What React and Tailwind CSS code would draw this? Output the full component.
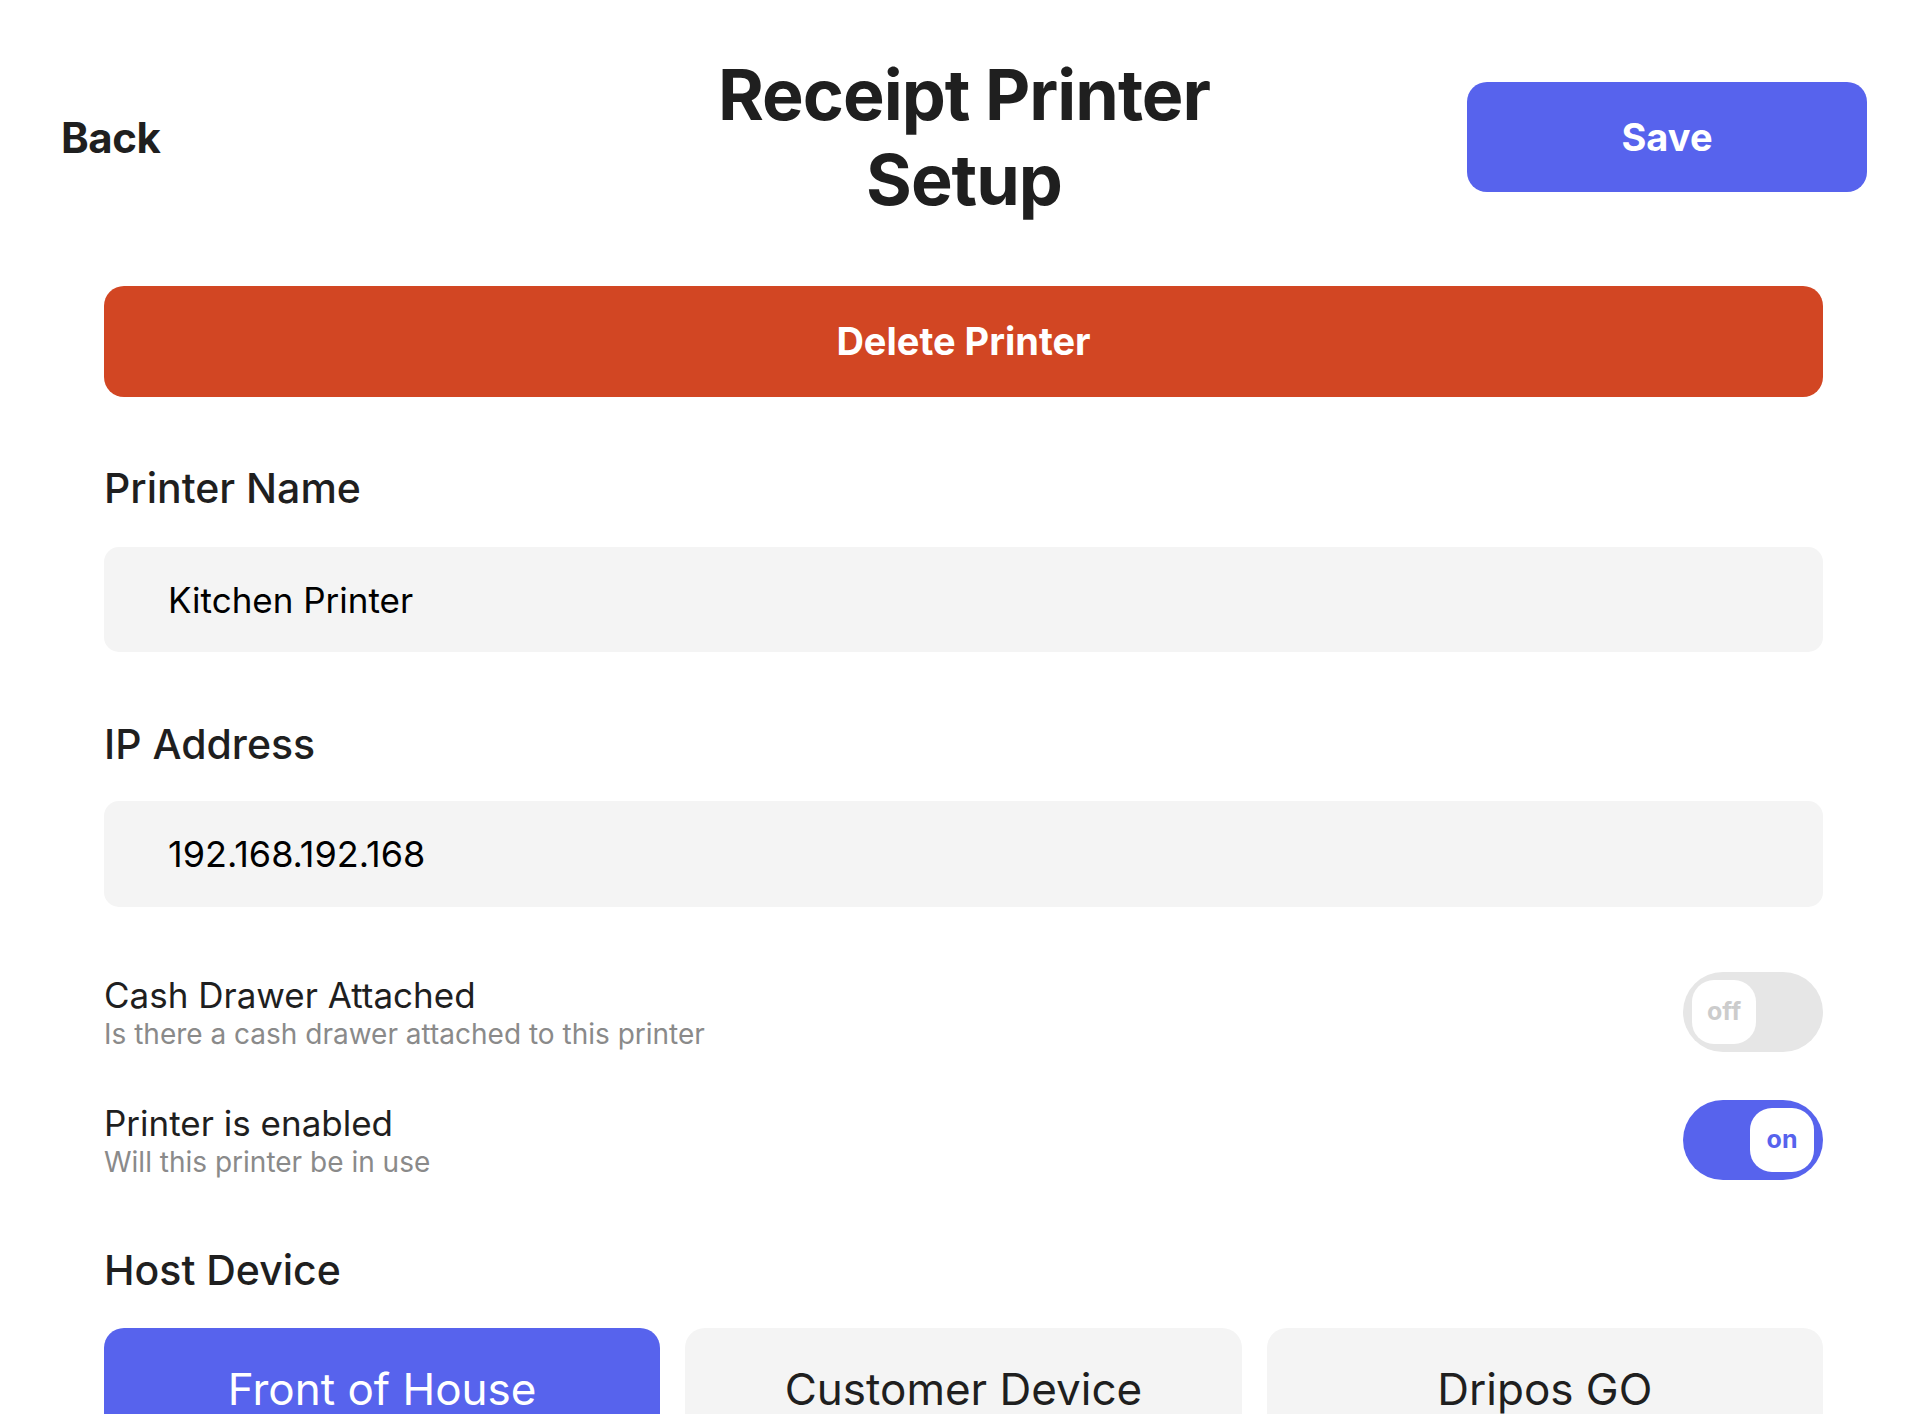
import React, { useState } from 'react';

const Toggle = ({ on, onChange }) => (
  <button
    onClick={() => onChange(!on)}
    className={`flex h-[80px] w-[140px] shrink-0 items-center rounded-[40px] px-[9px] ${
      on ? 'justify-end bg-[#5763ED]' : 'justify-start bg-[#E6E6E6]'
    }`}
  >
    <span
      className={`flex h-[64px] w-[64px] items-center justify-center rounded-[22px] bg-white text-[25px] font-bold ${
        on ? 'text-[#5763ED]' : 'text-[#CCCCCC]'
      }`}
    >
      {on ? 'on' : 'off'}
    </span>
  </button>
);

const ToggleRow = ({ title, subtitle, on, onChange }) => (
  <div className="flex items-center justify-between">
    <div className="flex flex-col">
      <span className="text-[35px] leading-[40px] text-[#1F1F1F]">{title}</span>
      <span className="mt-[3px] text-[28px] leading-[32px] text-[#8A8A8A]">{subtitle}</span>
    </div>
    <Toggle on={on} onChange={onChange} />
  </div>
);

const App = () => {
  const [name, setName] = useState('Kitchen Printer');
  const [ip, setIp] = useState('192.168.192.168');
  const [cashDrawer, setCashDrawer] = useState(false);
  const [enabled, setEnabled] = useState(true);
  const [host, setHost] = useState('Front of House');

  const hosts = ['Front of House', 'Customer Device', 'Dripos GO'];

  return (
    <div className="min-h-screen overflow-hidden bg-white font-['Inter',sans-serif] text-[#1F1F1F]">
      {/* Header */}
      <div className="flex items-center justify-between pt-[52px] pl-[61px] pr-[43px]">
        <button className="w-[400px] text-left text-[42px] font-bold tracking-[-0.5px]">Back</button>
        <h1 className="text-center text-[70px] font-bold leading-[85px] tracking-[-1px]">
          Receipt Printer
          <br />
          Setup
        </h1>
        <button className="h-[110px] w-[400px] rounded-[20px] bg-[#5763ED] text-[38px] font-bold text-white">
          Save
        </button>
      </div>

      <div className="ml-[104px] mr-[87px] mt-[64px] flex flex-col">
        <button className="h-[111px] w-full rounded-[20px] bg-[#D24623] text-[38px] font-bold text-white">
          Delete Printer
        </button>

        {/* Printer Name */}
        <label className="mt-[67px] text-[41px] font-medium leading-[48px]">Printer Name</label>
        <input
          value={name}
          onChange={(e) => setName(e.target.value)}
          className="mt-[35px] h-[105px] w-full rounded-[15px] bg-[#F4F4F4] pl-[64px] text-[35px] text-black outline-none"
        />

        {/* IP Address */}
        <label className="mt-[68px] text-[41px] font-medium leading-[48px]">IP Address</label>
        <input
          value={ip}
          onChange={(e) => setIp(e.target.value)}
          className="mt-[33px] h-[106px] w-full rounded-[15px] bg-[#F4F4F4] pl-[64px] text-[36px] text-black outline-none"
        />

        <div className="mt-[65px] flex flex-col gap-[48px]">
          <ToggleRow
            title="Cash Drawer Attached"
            subtitle="Is there a cash drawer attached to this printer"
            on={cashDrawer}
            onChange={setCashDrawer}
          />
          <ToggleRow
            title="Printer is enabled"
            subtitle="Will this printer be in use"
            on={enabled}
            onChange={setEnabled}
          />
        </div>

        {/* Host Device */}
        <label className="mt-[66px] text-[41px] font-medium leading-[48px]">Host Device</label>
        <div className="mt-[34px] grid grid-cols-3 gap-[25px]">
          {hosts.map((h) => (
            <button
              key={h}
              onClick={() => setHost(h)}
              className={`h-[122px] rounded-[20px] text-[44px] ${
                host === h ? 'bg-[#5763ED] text-white' : 'bg-[#F4F4F4] text-[#1F1F1F]'
              }`}
            >
              {h}
            </button>
          ))}
        </div>
      </div>
    </div>
  );
};

export default App;
